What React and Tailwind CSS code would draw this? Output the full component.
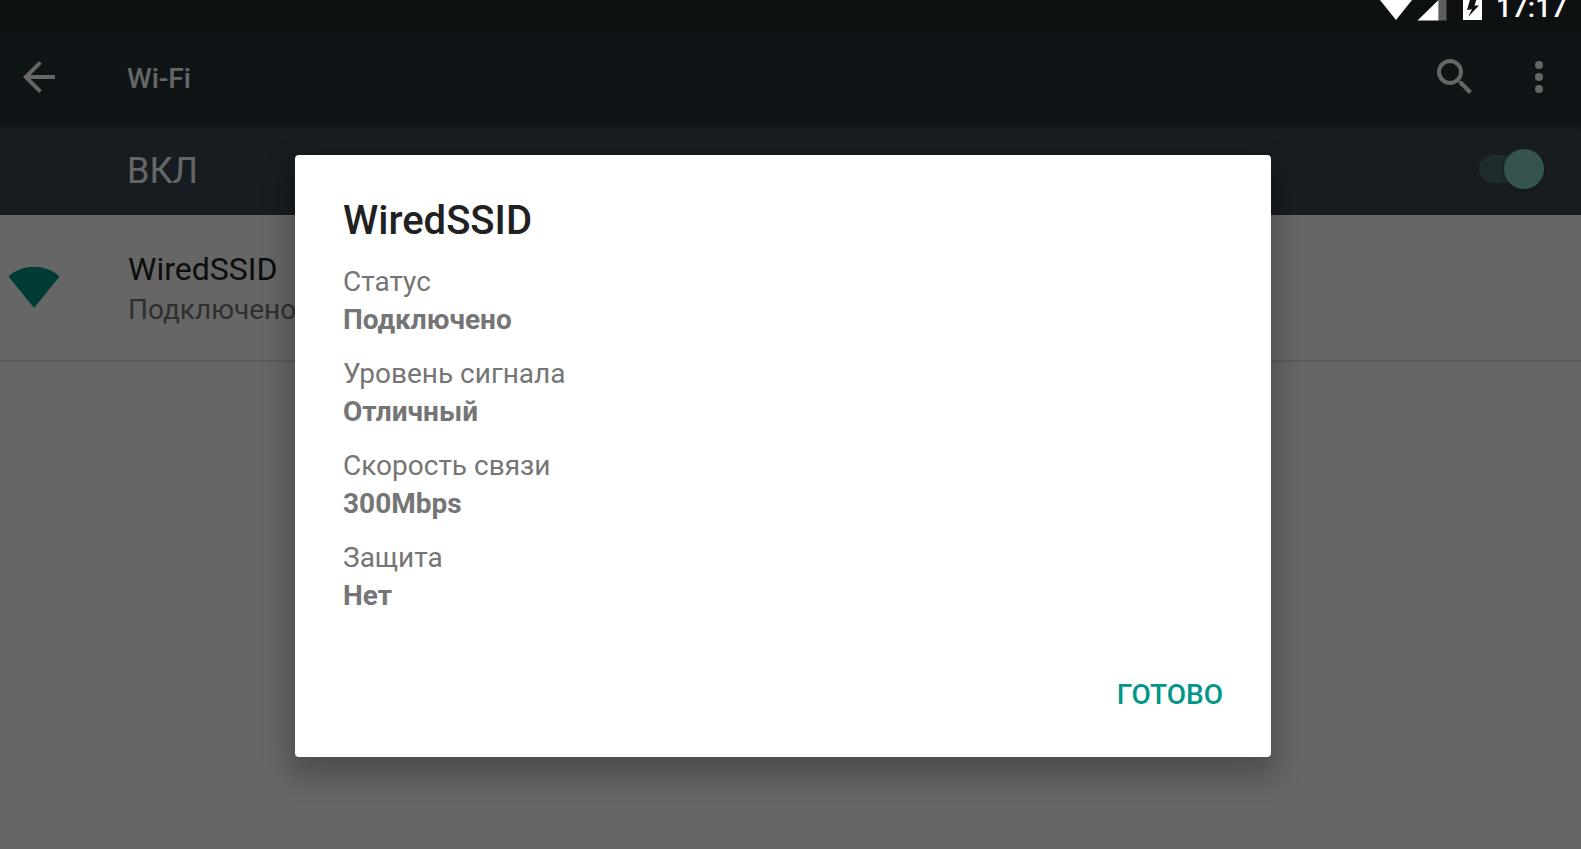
const details = [
  { label: 'Статус', value: 'Подключено' },
  { label: 'Уровень сигнала', value: 'Отличный' },
  { label: 'Скорость связи', value: '300Mbps' },
  { label: 'Защита', value: 'Нет' },
];

function StatusBar() {
  return (
    <div className="relative z-20 flex h-[31px] items-start justify-end bg-[#0d1112] pr-[14px] text-white">
      <svg className="mr-1 h-[21px] w-[34px]" viewBox="0 0 34 21" fill="currentColor">
        <path d="M1 0H33L17 20Z" />
      </svg>
      <svg className="mr-4 h-[21px] w-[30px]" viewBox="0 0 30 21">
        <path d="M21.500 0H29.500V20.500H21.500Z" fill="#5b5c5e" />
        <path d="M21.500 0V20.500H0.500Z" fill="#fff" />
      </svg>
      <svg className="mr-[14px] h-5 w-[19px]" viewBox="0 0 19 20">
        <path d="M0 0H19V20H0Z" fill="#fff" />
        <path d="M7.500 -2L4 10L9 9.300L5 17L16 5.500H11.500L14 -2Z" fill="#0d1112" />
      </svg>
      <span className="-mt-2 text-[28px] leading-8 font-medium">17:17</span>
    </div>
  );
}

function Toolbar() {
  return (
    <header className="flex h-[92px] items-center bg-[#263238] pr-6 pl-[23px] text-white">
      <button type="button" aria-label="Назад" className="mr-[72px]">
        <svg className="h-8 w-8" viewBox="0 0 32 32" fill="currentColor">
          <path d="M32 14H7.660L18.840 2.820L16 0L0 16L16 32L18.820 29.180L7.660 18H32Z" />
        </svg>
      </button>
      <h1 className="flex-1 pt-1 text-[28px] leading-8 font-medium">Wi-Fi</h1>
      <button type="button" aria-label="Поиск" className="mr-[63px] pb-0.5">
        <svg className="h-[35px] w-[35px]" viewBox="0 0 35 35" fill="currentColor">
          <path d="M25 22H23.420L22.860 21.460A12.930 12.930 0 0 0 26 13A13 13 0 1 0 13 26C16.220 26 19.180 24.820 21.460 22.860L22 23.420V25L32 34.980L34.980 32ZM13 22A9 9 0 1 1 13 4A9 9 0 0 1 13 22Z" />
        </svg>
      </button>
      <button type="button" aria-label="Ещё" className="mr-[14px]">
        <svg className="h-8 w-2" viewBox="0 0 8 32" fill="currentColor">
          <circle cx="4" cy="4" r="4" />
          <circle cx="4" cy="16" r="4" />
          <circle cx="4" cy="28" r="4" />
        </svg>
      </button>
    </header>
  );
}

function WifiSwitch() {
  return (
    <label className="flex h-[92px] items-center justify-between bg-[#3a4852] pr-[37px] pl-[127px] shadow-[inset_0_6px_6px_-4px_rgba(0,0,0,0.3)]">
      <span className="pt-1 text-[36px] leading-10 text-white">ВКЛ</span>
      <input
        type="checkbox"
        role="switch"
        defaultChecked
        className="flex h-7 w-[65px] appearance-none items-center justify-end rounded-full bg-[#4d6e6e] before:h-10 before:w-10 before:shrink-0 before:rounded-full before:bg-[#84cfc4] before:shadow-[0_2px_4px_rgba(0,0,0,0.2)]"
      />
    </label>
  );
}

function Network() {
  return (
    <a href="#wired" className="flex h-[147px] items-center border-b-2 border-[#e0e0e0] pl-2">
      <svg className="mr-[68px] h-[42px] w-[52px]" viewBox="0 0 52 42" fill="#009688">
        <path d="M0.500 9.500C15 -3.500 37 -3.500 51.500 9.500L26 41Z" />
      </svg>
      <span className="flex flex-col pt-1">
        <span className="text-[32px] leading-10 text-[#222222]">WiredSSID</span>
        <span className="text-[28px] leading-[42px] text-[#757575]">Подключено</span>
      </span>
    </a>
  );
}

function DetailsDialog() {
  return (
    <div className="absolute inset-0 z-10 flex items-start justify-center bg-black/60 pt-[155px] pr-[15px]">
      <div
        role="dialog"
        aria-labelledby="dialog-title"
        className="w-full max-w-[976px] rounded-[4px] bg-white px-12 pt-[42px] pb-[38px] shadow-[0_14px_28px_6px_rgba(0,0,0,0.24)]"
      >
        <h2 id="dialog-title" className="mb-[18px] text-[40px] leading-12 font-medium text-[#212121]">
          WiredSSID
        </h2>
        <dl className="flex flex-col gap-4 text-[28px] leading-[38px] text-[#757575]">
          {details.map((item) => (
            <div key={item.label}>
              <dt>{item.label}</dt>
              <dd className="font-bold">{item.value}</dd>
            </div>
          ))}
        </dl>
        <div className="mt-14 flex justify-end">
          <button type="button" className="h-12 text-[28px] leading-12 font-medium text-[#009688]">
            ГОТОВО
          </button>
        </div>
      </div>
    </div>
  );
}

function App() {
  return (
    <div className="relative min-h-screen overflow-hidden bg-white font-['Roboto',sans-serif]">
      <StatusBar />
      <Toolbar />
      <WifiSwitch />
      <Network />
      <DetailsDialog />
    </div>
  );
}

export default App;
